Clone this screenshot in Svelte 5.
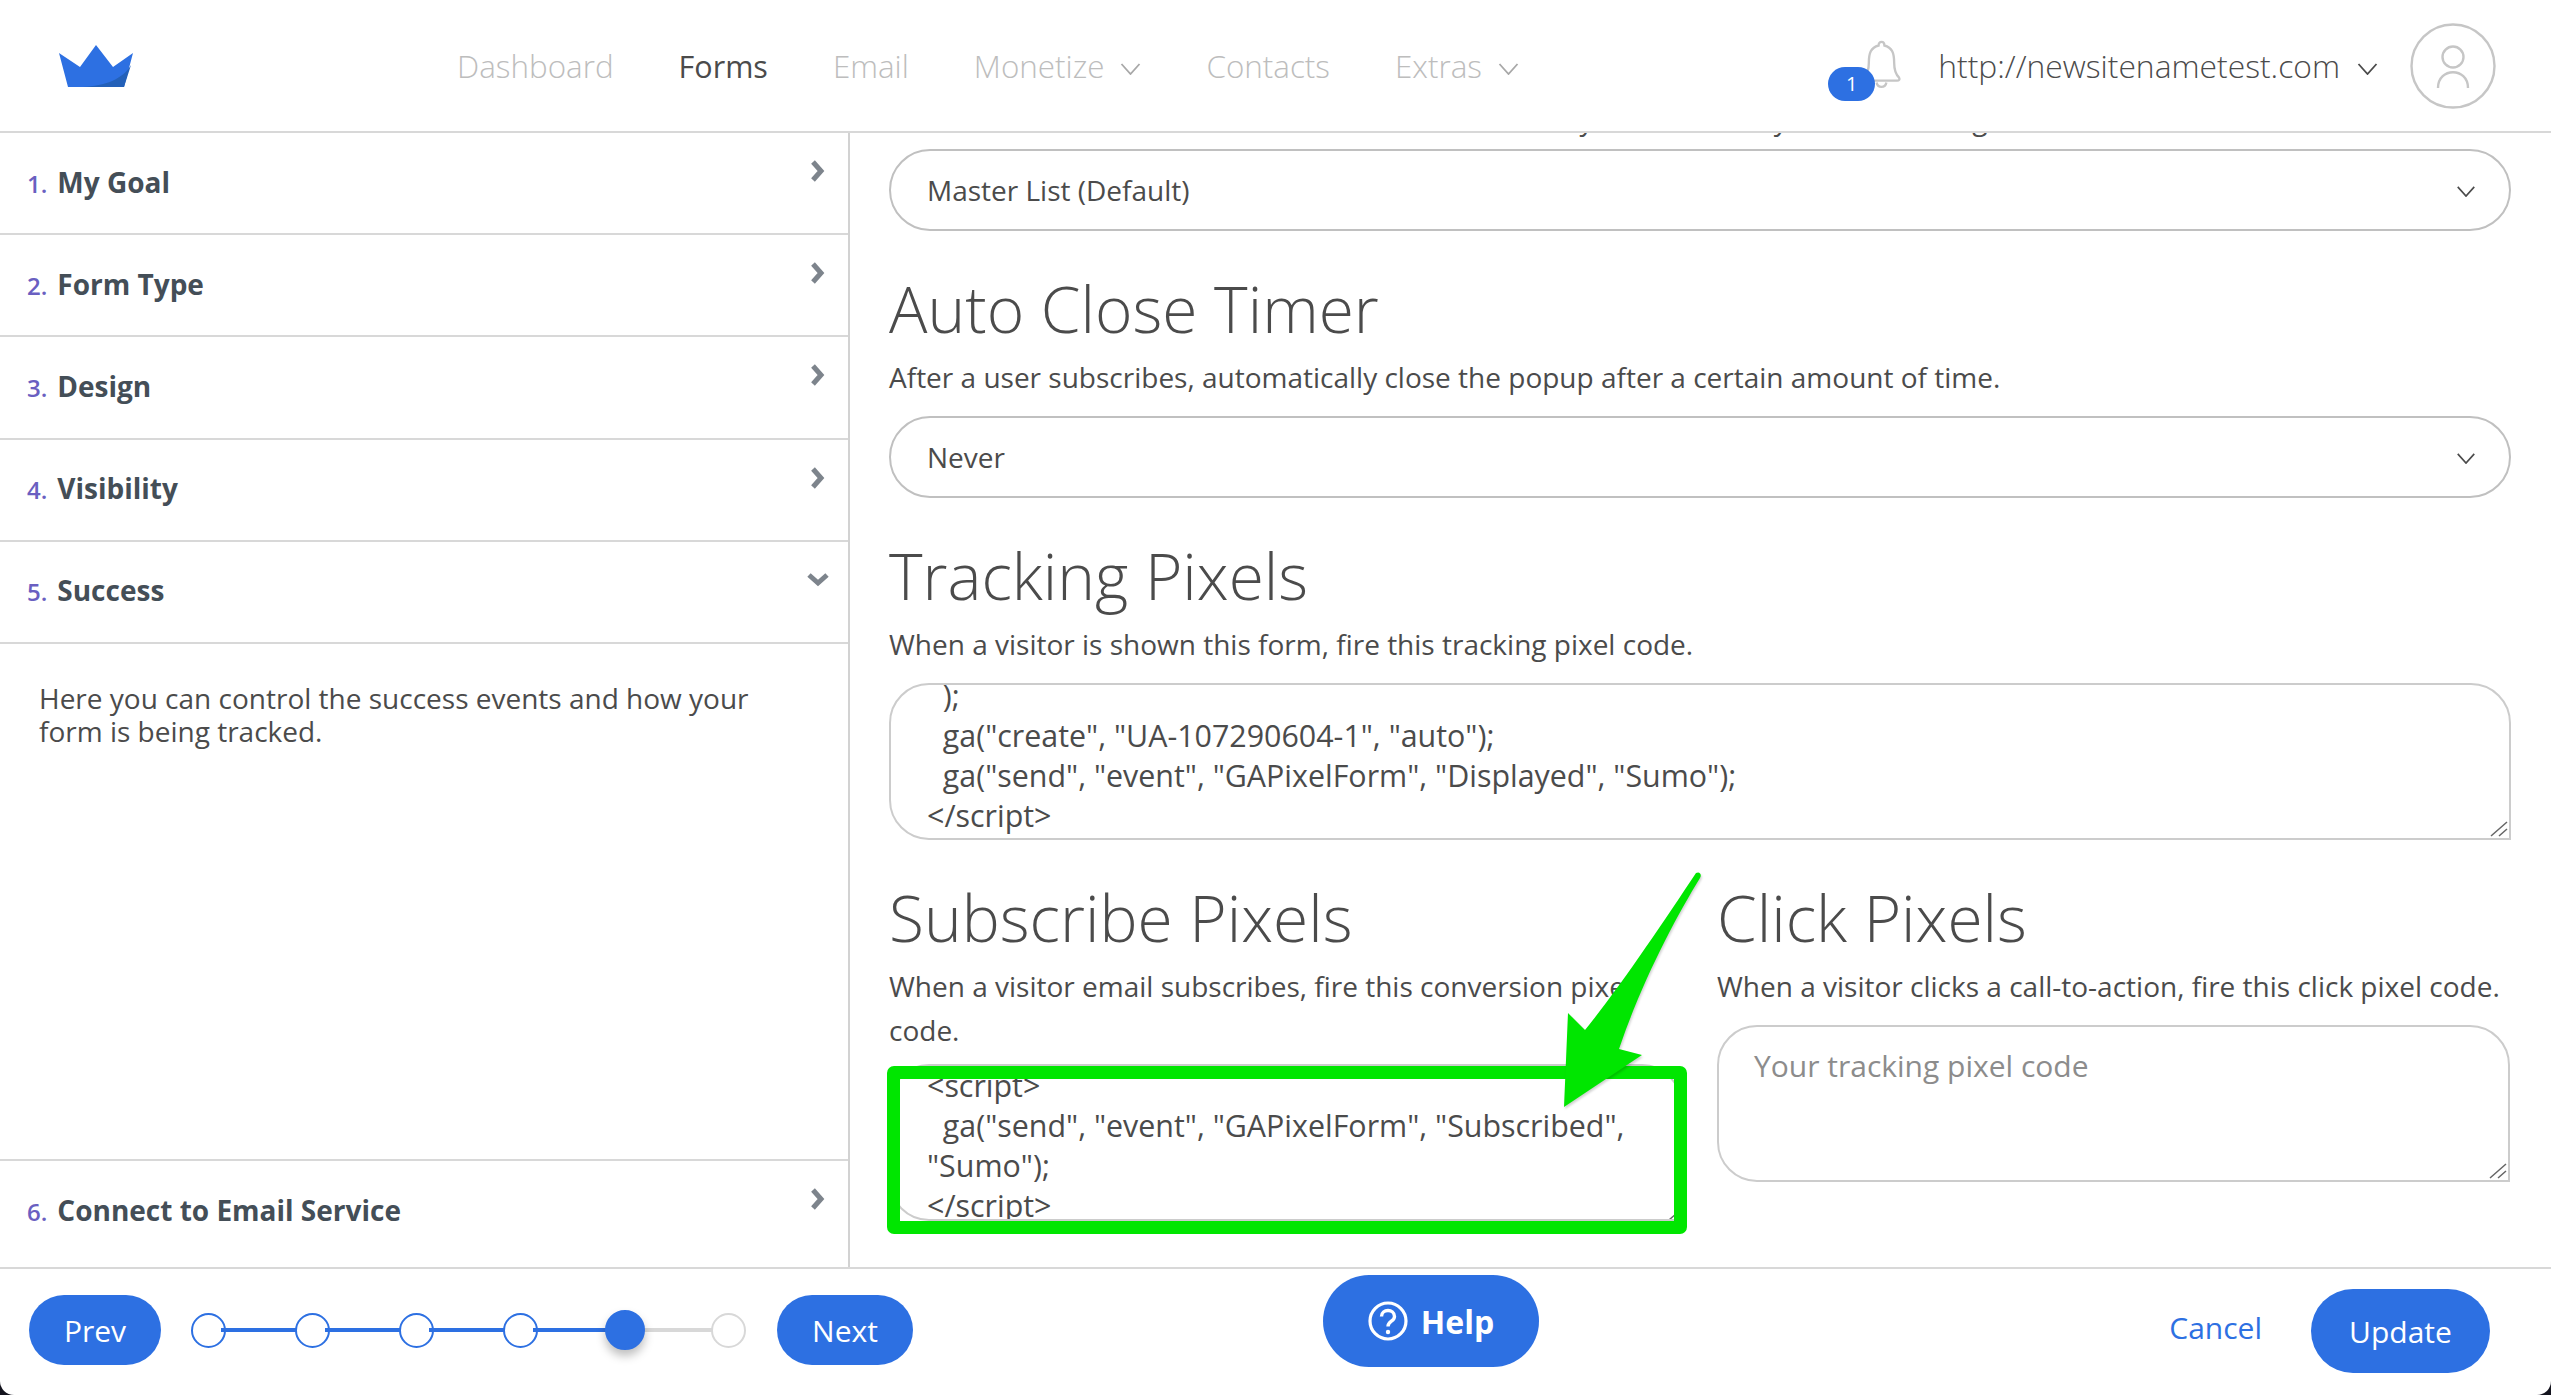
<script>
  const rows = [
    { n: 1, label: 'My Goal' },
    { n: 2, label: 'Form Type' },
    { n: 3, label: 'Design' },
    { n: 4, label: 'Visibility' },
    { n: 5, label: 'Success', open: true }
  ];
  const nav = [
    { label: 'Dashboard' },
    { label: 'Forms', active: true },
    { label: 'Email' },
    { label: 'Monetize', menu: true },
    { label: 'Contacts' },
    { label: 'Extras', menu: true }
  ];
  const trackingCode = `  );
  ga("create", "UA-107290604-1", "auto");
  ga("send", "event", "GAPixelForm", "Displayed", "Sumo");
</scr` + `ipt>`;
  const subscribeCode = `<scr` + `ipt>
  ga("send", "event", "GAPixelForm", "Subscribed", "Sumo");
</scr` + `ipt>`;
  const steps = ['done', 'done', 'done', 'done', 'current', 'todo'];
</script>

{#snippet chev(cls)}
  <svg class={cls} viewBox="0 0 20 12" aria-hidden="true"><path d="M1 1 L10 11 L19 1" fill="none" stroke="currentColor" stroke-width="1.8"/></svg>
{/snippet}

{#snippet grip()}
  <svg class="grip" viewBox="0 0 18 16" aria-hidden="true"><path d="M1 15 L17 1 M9 15 L17 8" fill="none" stroke="#666" stroke-width="1.5"/></svg>
{/snippet}

<div class="backdrop">
  <div class="page">
    <header class="top">
      <svg class="logo" viewBox="0 0 74 42" aria-hidden="true">
        <path d="M0 8 L21 22 L37 0 L54 22 L74 8 L65 42 L9 42 Z" fill="#2d70e2"/>
        <path d="M24 42 C46 41 64 34 72 20 L65 42 Z" fill="#2360b8"/>
      </svg>
      <nav class="nav">
        {#each nav as item}
          <span class="nav-item" class:active={item.active}>
            {item.label}
            {#if item.menu}{@render chev('nav-chev')}{/if}
          </span>
        {/each}
      </nav>
      <div class="account">
        <div class="bell">
          <svg viewBox="0 0 40 52" aria-hidden="true">
            <path d="M17 6 C17 1 23 1 23 6 C31 8 33 14 33 24 C33 32 35 36 38 39 C39 41 38 42 36 42 L5 42 C2 42 1 41 2 39 C5 36 7 32 7 24 C7 14 9 8 17 6 Z M15 44 C16 50 24 50 25 44" fill="none" stroke="#c6c6c6" stroke-width="2.4"/>
          </svg>
          <span class="badge">1</span>
        </div>
        <span class="site">http://newsitenametest.com</span>
        {@render chev('site-chev')}
        <svg class="avatar" viewBox="0 0 86 86" aria-hidden="true">
          <circle cx="43" cy="43" r="41.5" fill="none" stroke="#c6c6c6" stroke-width="2.4"/>
          <circle cx="43" cy="34" r="10.5" fill="none" stroke="#c6c6c6" stroke-width="2.4"/>
          <path d="M28 65 C28 44 58 44 58 65" fill="none" stroke="#c6c6c6" stroke-width="2.4"/>
        </svg>
      </div>
    </header>

    <main class="main">
      <aside class="side">
        {#each rows as row}
          <div class="row">
            <span class="label"><b>{row.n}.</b>{row.label}</span>
            {#if row.open}
              <svg class="arrow down" viewBox="0 0 24 15" aria-hidden="true"><path d="M3 3 L12 11 L21 3" fill="none" stroke="#7d848c" stroke-width="5"/></svg>
            {:else}
              <svg class="arrow" viewBox="0 0 15 24" aria-hidden="true"><path d="M3 3 L11 12 L3 21" fill="none" stroke="#7d848c" stroke-width="5"/></svg>
            {/if}
          </div>
        {/each}
        <p class="help-text">Here you can control the success events and how your form is being tracked.</p>
        <div class="row last">
          <span class="label"><b>6.</b>Connect to Email Service</span>
          <svg class="arrow" viewBox="0 0 15 24" aria-hidden="true"><path d="M3 3 L11 12 L3 21" fill="none" stroke="#7d848c" stroke-width="5"/></svg>
        </div>
      </aside>

      <section class="content">
        <p class="desc cut">Select the list that new subscribers will be added to by a form as they send a message here</p>
        <div class="select">Master List (Default){@render chev('sel-chev')}</div>

        <h2>Auto Close Timer</h2>
        <p class="desc">After a user subscribes, automatically close the popup after a certain amount of time.</p>
        <div class="select">Never{@render chev('sel-chev')}</div>

        <h2>Tracking Pixels</h2>
        <p class="desc">When a visitor is shown this form, fire this tracking pixel code.</p>
        <div class="area"><pre class="code tracking">{trackingCode}</pre>{@render grip()}</div>

        <div class="cols">
          <div class="col">
            <h2>Subscribe Pixels</h2>
            <p class="desc">When a visitor email subscribes, fire this conversion pixel code.</p>
            <div class="area subscribe"><pre class="code">{subscribeCode}</pre>{@render grip()}</div>
          </div>
          <div class="col">
            <h2>Click Pixels</h2>
            <p class="desc">When a visitor clicks a call-to-action, fire this click pixel code.</p>
            <div class="area"><span class="placeholder">Your tracking pixel code</span>{@render grip()}</div>
          </div>
        </div>

        <div class="green-frame"></div>
        <svg class="green-arrow" viewBox="0 0 144 244" aria-hidden="true">
          <path d="M132 2 C136 0 138 4 136 7 C112 46 78 110 55 178 L78 184 L0 236 L4 142 L21 159 C56 116 100 50 132 2 Z" fill="#00e600"/>
        </svg>
      </section>
    </main>

    <footer class="foot">
      <button class="btn prev">Prev</button>
      <div class="stepper">
        {#each steps as s, i}
          {#if i > 0}<span class="link" class:off={s === 'todo'}></span>{/if}
          <span class="dot {s}"></span>
        {/each}
      </div>
      <button class="btn next">Next</button>
      <button class="btn help">
        <svg viewBox="0 0 40 40" aria-hidden="true">
          <circle cx="20" cy="20" r="18" fill="none" stroke="#fff" stroke-width="3.2"/>
          <path d="M13.5 15.5 C13.5 7.5 26.5 7.5 26.5 15.5 C26.5 20.5 20 20 20 25.5" fill="none" stroke="#fff" stroke-width="3.4"/>
          <circle cx="20" cy="31" r="2.2" fill="#fff"/>
        </svg>
        Help
      </button>
      <span class="cancel">Cancel</span>
      <button class="btn update">Update</button>
    </footer>
  </div>
</div>

<style>
  :global(body) { background: #fff; }
  .backdrop { width: 2551px; height: 1395px; background: #14141e; }
  .page {
    width: 100%; height: 100%; background: #fff; border-radius: 0 0 14px 14px; overflow: hidden;
    display: flex; flex-direction: column;
    font-family: "Open Sans", "Liberation Sans", sans-serif; color: #4b4b4b;
  }

  .top { flex: none; height: 133px; box-sizing: border-box; border-bottom: 2px solid #d8d8d8; display: flex; align-items: center; padding: 0 55px 0 59px; }
  .logo { width: 74px; height: 42px; flex: none; }
  .nav { display: flex; gap: 65px; margin-left: 324px; font-size: 31.4px; font-weight: 300; color: #bdbdbd; }
  .nav-item { display: flex; align-items: center; gap: 16px; white-space: nowrap; }
  .nav-item.active { color: #4b4b4b; font-weight: 400; font-size: 30.5px; }
  .nav-chev { width: 21px; height: 12px; margin-top: 6px; color: #a8a8a8; }
  .account { margin-left: auto; display: flex; align-items: center; }
  .bell { position: relative; width: 72px; height: 70px; margin-right: 38px; }
  .bell svg { position: absolute; left: 34px; top: 8px; width: 39px; height: 52px; }
  .badge { position: absolute; left: 0; top: 36px; width: 47px; height: 34px; border-radius: 17px; background: #2d70e2; color: #fff; font-size: 20px; display: flex; align-items: center; justify-content: center; }
  .site { font-size: 31.8px; font-weight: 300; white-space: nowrap; }
  .site-chev { width: 21px; height: 12px; margin: 6px 0 0 17px; color: #4b4b4b; }
  .avatar { width: 86px; height: 86px; margin-left: 32px; }

  .main { flex: 1; min-height: 0; display: flex; }
  .side { flex: none; width: 850px; box-sizing: border-box; border-right: 2px solid #d2d2d2; display: flex; flex-direction: column; }
  .row { flex: none; height: 102.2px; box-sizing: border-box; border-bottom: 2.5px solid #d8d8d8; display: flex; justify-content: space-between; padding: 0 23px 0 27px; }
  .label { align-self: center; font-size: 28px; font-weight: 700; color: #444e57; margin-top: -3px; white-space: nowrap; }
  .label b { color: #6a5fc1; font-weight: 600; font-size: 24px; margin-right: 10px; }
  .arrow { width: 15px; height: 24px; margin-top: 26px; flex: none; }
  .arrow.down { width: 24px; height: 15px; margin: 30px -5px 0 0; }
  .help-text { flex: 1; margin: 0; padding: 38px 90px 0 39px; font-size: 28px; line-height: 33px; font-weight: 400; color: #4b4b4b; }
  .row.last { height: 108px; border-bottom: none; border-top: 2.5px solid #d8d8d8; }
  .row.last .label { margin-top: -8px; }

  .content { flex: 1; position: relative; overflow: hidden; padding: 0 40px 0 39px; min-width: 0; }
  h2 { margin: 40px 0 8px; font-size: 64px; line-height: 76px; font-weight: 300; color: #4b4b4b; white-space: nowrap; }
  .desc { margin: 0 0 17px; font-size: 28px; line-height: 44px; font-weight: 400; color: #4b4b4b; }
  .cut { margin: -36px 0 8px; white-space: nowrap; }
  .select { position: relative; box-sizing: border-box; height: 82px; border: 2.5px solid #c0c0c0; border-radius: 41px; padding-left: 36px; font-size: 28px; display: flex; align-items: center; }
  .sel-chev { position: absolute; right: 33px; top: 35px; width: 20px; height: 11px; color: #4b4b4b; }

  .area { position: relative; box-sizing: border-box; height: 157px; border: 2.5px solid #cccccc; border-radius: 40px 40px 0 40px; overflow: hidden; padding: 0 36px; font-size: 30.4px; }
  .code { margin: -9px 0 0; font: inherit; line-height: 40px; white-space: pre-wrap; color: #4b4b4b; }
  .subscribe { margin-top: -5px; }
  .subscribe .code { margin-top: 0; }
  .subscribe .grip { right: -6px; bottom: -2px; }
  .placeholder { display: block; margin: 19px 0 0 -1px; font-size: 30px; line-height: 40px; color: #8c8c8c; }
  .grip { position: absolute; right: 1px; bottom: 1px; width: 18px; height: 16px; }

  .cols { display: grid; grid-template-columns: 793px 793px; gap: 35px; }

  .green-frame { position: absolute; left: 37px; top: 933px; width: 800px; height: 168px; box-sizing: border-box; border: 13.5px solid #00e600; border-radius: 7px; }
  .green-arrow { position: absolute; left: 714px; top: 738px; width: 144px; height: 244px; filter: drop-shadow(1px 2px 1px rgba(0,0,0,.18)); }

  .foot { flex: none; height: 128px; box-sizing: border-box; border-top: 2.5px solid #d8d8d8; display: flex; align-items: flex-start; padding: 0 61px 0 29px; position: relative; }
  .btn { border: none; background: #2d70e2; color: #fff; font-family: inherit; font-size: 30px; font-weight: 400; padding: 0; display: flex; align-items: center; justify-content: center; }
  .prev { width: 132px; height: 70px; margin-top: 26px; border-radius: 35px; }
  .next { width: 136px; height: 70px; margin: 26px 0 0 1px; border-radius: 35px; }
  .stepper { display: flex; align-items: center; height: 70px; margin: 26px 30px 0 30px; }
  .dot { flex: none; box-sizing: border-box; width: 35px; height: 35px; border-radius: 50%; background: #fff; border: 2.5px solid #2d70e2; position: relative; z-index: 0; }
  .dot.current { width: 40px; height: 40px; margin: 0 -2.5px; background: #2d70e2; box-shadow: 0 6px 10px rgba(0,0,0,.25); z-index: 1; }
  .dot.todo { border-color: #d8d8d8; }
  .link { flex: none; width: 79px; height: 3.5px; margin: 0 -5px; background: #2d70e2; z-index: 0; position: relative; }
  .link.off { background: #d8d8d8; }
  .help { width: 216px; height: 92px; margin: 6px 0 0 410px; border-radius: 46px; font-weight: 700; font-size: 32px; gap: 13px; padding-right: 0; box-sizing: border-box; }
  .help svg { width: 40px; height: 40px; }
  .cancel { margin: 38px 0 0 auto; font-size: 30px; font-weight: 400; color: #2d70e2; line-height: 42px; }
  .update { width: 179px; height: 84px; margin: 20px 0 0 49px; border-radius: 42px; }
</style>
